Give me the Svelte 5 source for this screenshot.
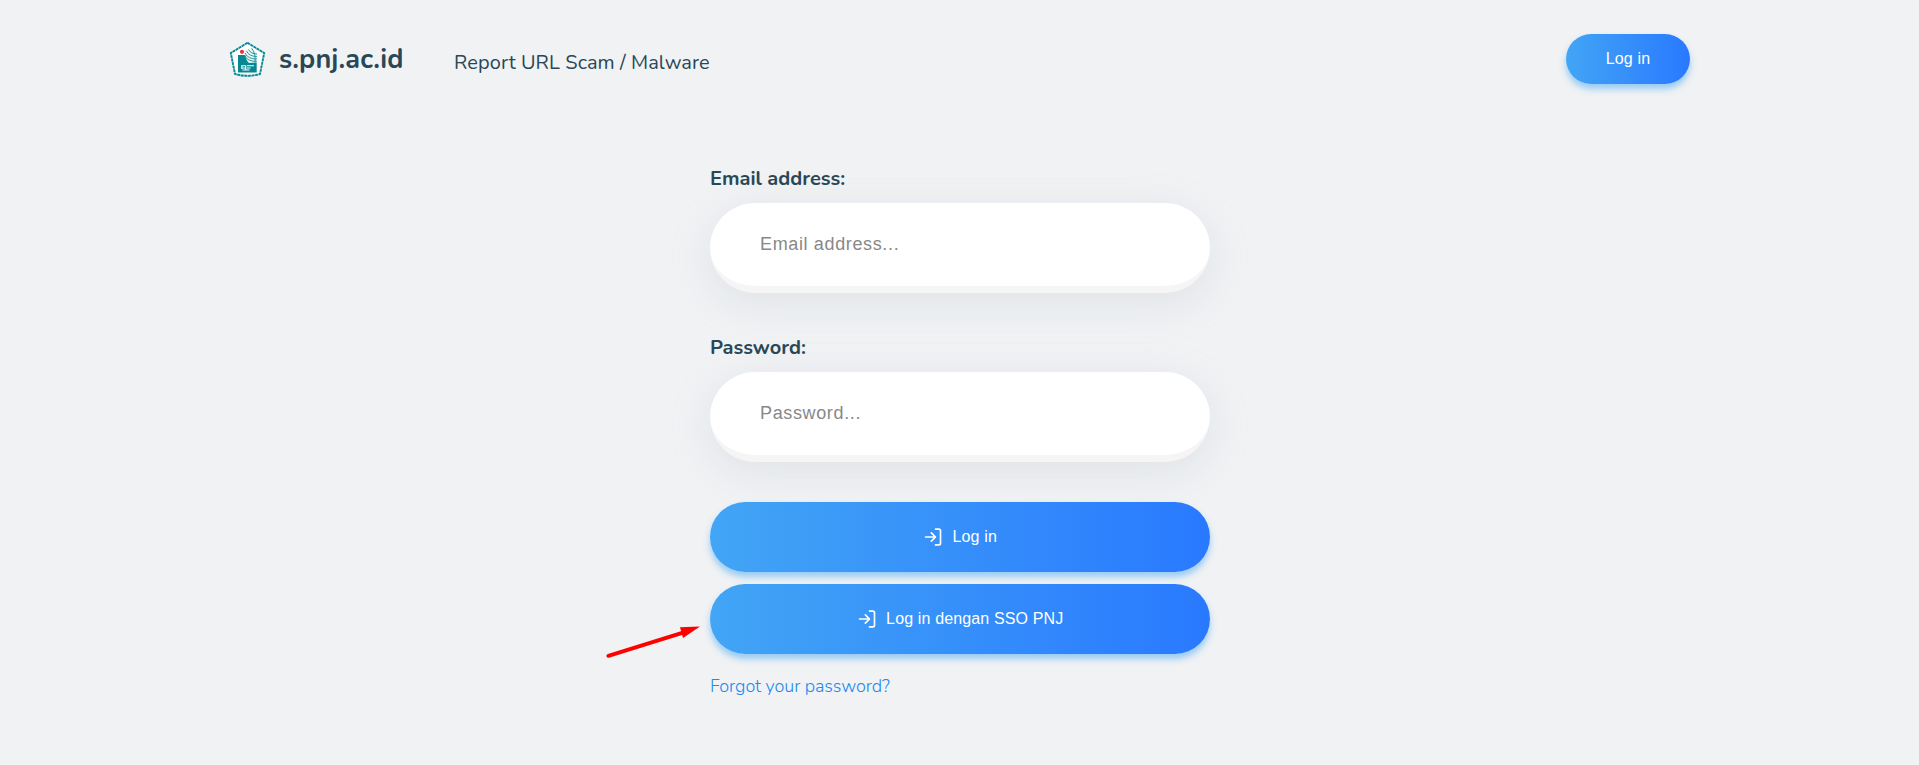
<script>
  const fields = [
    { id: 'email', label: 'Email address:', placeholder: 'Email address...', type: 'email' },
    { id: 'password', label: 'Password:', placeholder: 'Password...', type: 'password' }
  ];
  const actions = ['Log in', 'Log in dengan SSO PNJ'];
</script>

<div class="page">
  <header>
    <a class="brand" href="/">
      <svg class="crest" width="38" height="38" viewBox="0 -1 38 38" aria-hidden="true">
        <path d="M18.5 1.8 L35.2 12 L31 33 Q18.5 36.6 6 33 L1.8 12 Z" fill="#fff" stroke="#8ccbd0" stroke-width="1.9" stroke-linejoin="round" />
        <path d="M18.5 1.8 L35.2 12 L31 33 Q18.5 36.6 6 33 L1.8 12 Z" fill="none" stroke="#078791" stroke-width="1.7" stroke-dasharray="2.6 1" />
        <path d="M9 14 H27.7 V31.5 H9 Z" fill="#078791" />
        <path d="M15.5 8.5 L23 6.8 L28.5 13 L27.7 21.5 L20 22 Q16 19 15.5 8.5 Z" fill="#e9f6f6" />
        <g fill="none" stroke="#078791" stroke-width=".85">
          <path d="M16 12 Q18.5 18 28 18" />
          <path d="M17.5 10 Q20 15.5 28 15.5" />
          <path d="M19.5 8.5 Q22 13 28 13" />
          <path d="M15.8 14.5 Q18 20.5 27.7 20.3" />
          <path d="M22.7 7.3 Q27 13 26 21.5" />
        </g>
        <circle cx="13" cy="10.8" r="2.1" fill="#e7353c" />
        <path d="M12.3 24.8 H17 M12.3 27 H16.5 M13.5 29 H20.5 M18 24.8 H25 M18 27 H21.5 M12.8 24.5 V28 M16.8 24.5 V29" stroke="#fff" stroke-width="1.1" />
      </svg>
      <span class="brand-name">s.pnj.ac.id</span>
    </a>
    <a class="report" href="/report">Report URL Scam / Malware</a>
    <button class="pill small">Log in</button>
  </header>

  <form onsubmit={(e) => e.preventDefault()}>
    {#each fields as field}
      <label for={field.id}>{field.label}</label>
      <input id={field.id} type={field.type} placeholder={field.placeholder} />
    {/each}
    <div class="actions">
      {#each actions as text}
        <button class="pill">
          <svg width="20" height="20" viewBox="0 0 24 24" fill="none" stroke="currentColor" stroke-width="2" stroke-linecap="round" stroke-linejoin="round" aria-hidden="true">
            <path d="M15 2.5h4a2 2 0 0 1 2 2v15a2 2 0 0 1-2 2h-4M10 17l5-5-5-5M15 12H3" />
          </svg>
          <span>{text}</span>
        </button>
      {/each}
      <svg class="arrow" width="98" height="36" viewBox="0 0 98 36" aria-hidden="true">
        <path d="M4.4 30.8 L79 7.6" stroke="#f00" stroke-width="4" stroke-linecap="round" />
        <path d="M76 2.2 L96 1.4 L79 13 Z" fill="#f00" />
      </svg>
    </div>
    <a class="forgot" href="/forgot">Forgot your password?</a>
  </form>
</div>

<style>
  :global(body) { margin: 0; background: #f0f2f4; }
  .page {
    box-sizing: border-box;
    height: 765px;
    overflow: hidden;
    background: #f0f2f4;
    color: #294756;
    font-family: Nunito, "Open Sans", sans-serif;
  }
  a { color: inherit; text-decoration: none; }
  header {
    display: flex;
    align-items: center;
    height: 118px;
    padding: 0 229px;
  }
  .brand { display: flex; align-items: center; width: 225px; }
  .crest { flex: none; margin-right: 12px; }
  .brand-name {
    padding-top: 1px;
    font-size: 27px;
    line-height: 36px;
    font-weight: 700;
    letter-spacing: .15px;
    white-space: nowrap;
  }
  .report {
    font-size: 20px;
    font-weight: 400;
    line-height: 28px;
    letter-spacing: .08px;
    padding-top: 7px;
    white-space: nowrap;
  }
  .pill {
    display: flex;
    align-items: center;
    justify-content: center;
    gap: 9.5px;
    box-sizing: border-box;
    width: 500px;
    height: 70px;
    margin: 0;
    padding: 0;
    border: 0;
    border-radius: 100px;
    color: #fff;
    background: linear-gradient(to right, #42a5f5, #2979ff);
    box-shadow: 0 5px 6px rgba(66, 165, 245, .5);
    font: 16px/20px "Liberation Sans", Arial, sans-serif;
    letter-spacing: .14px;
  }
  .small { width: 124px; height: 50px; margin-left: auto; }
  form {
    display: flex;
    flex-direction: column;
    width: 500px;
    margin: 47px 0 0 710px;
  }
  label {
    height: 28px;
    margin-bottom: 10px;
    font-size: 20px;
    line-height: 28px;
    font-weight: 700;
    white-space: nowrap;
  }
  input {
    box-sizing: border-box;
    width: 500px;
    height: 90px;
    margin: 0 0 41px;
    padding: 0 50px;
    border: 0;
    border-bottom: 7px solid #f5f5f5;
    border-radius: 100px;
    outline: none;
    background: #fff;
    box-shadow: 0 10px 40px rgba(172, 178, 192, .23);
    color: #444;
    font: 18px "Liberation Sans", Arial, sans-serif;
    letter-spacing: .64px;
  }
  #password { margin-bottom: 40px; }
  input::placeholder { color: #888; opacity: 1; }
  .actions { display: flex; flex-direction: column; gap: 12px; position: relative; }
  .arrow { position: absolute; left: -106px; top: 123px; }
  .forgot {
    align-self: flex-start;
    margin-top: 19px;
    color: #2088f0;
    font-size: 18px;
    line-height: 26px;
    font-weight: 300;
    letter-spacing: -.07px;
    white-space: nowrap;
  }
</style>
